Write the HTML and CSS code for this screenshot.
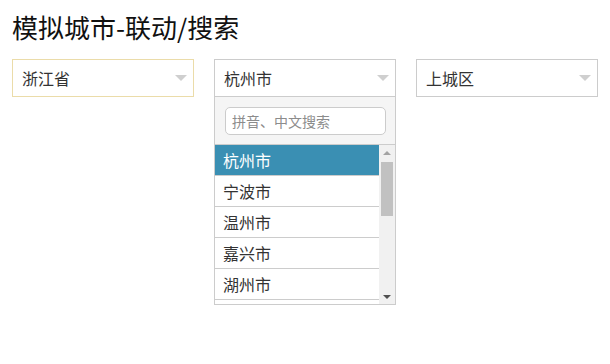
FILE: index.html
```html
<!doctype html>
<html>
<head>
    <meta charset="utf-8">
    <title>模拟城市-联动/搜索</title>
    <link rel="stylesheet" href="styles.css">
</head>

<body>
    <div class="page">
        <h1 class="title">模拟城市-联动/搜索</h1>

        <div class="selects">
            <div class="select focus">
                <div class="select-head">
                    <span>浙江省</span>
                    <i class="arrow"></i>
                </div>
            </div>

            <div class="select open">
                <div class="select-head">
                    <span>杭州市</span>
                    <i class="arrow"></i>
                </div>
                <div class="panel">
                    <div class="search">
                        <input type="text" placeholder="拼音、中文搜索" />
                    </div>
                    <div class="list-wrap">
                        <ul class="list">
                            <li class="on">杭州市</li>
                            <li>宁波市</li>
                            <li>温州市</li>
                            <li>嘉兴市</li>
                            <li>湖州市</li>
                            <li>绍兴市</li>
                        </ul>
                        <div class="scrollbar">
                            <div class="sb-btn up"></div>
                            <div class="sb-track">
                                <div class="sb-thumb"></div>
                            </div>
                            <div class="sb-btn down"></div>
                        </div>
                    </div>
                </div>
            </div>

            <div class="select">
                <div class="select-head">
                    <span>上城区</span>
                    <i class="arrow"></i>
                </div>
            </div>
        </div>
    </div>
</body>
</html>
```

FILE: styles.css
```css
* {
  box-sizing: border-box;
}

html, body {
  margin: 0;
  padding: 0;
  background: #ffffff;
}

body {
  font-family: "Noto Sans CJK SC", "Liberation Sans", sans-serif;
  color: #333333;
}

.page {
  padding: 8px 12px;
}

.title {
  margin: 0;
  height: 39px;
  line-height: 38px;
  font-size: 26px;
  font-weight: normal;
  color: #111111;
}

.selects {
  display: flex;
  align-items: flex-start;
  gap: 20px;
  margin-top: 12px;
}

.select {
  width: 182px;
  border: 1px solid #cccccc;
  background: #ffffff;
}

.select.focus {
  border-color: #ebdca9;
}

.select-head {
  height: 36px;
  display: flex;
  align-items: center;
  justify-content: space-between;
  padding: 0 6px 0 9px;
  font-size: 16px;
}

.arrow {
  width: 0;
  height: 0;
  border-left: 6px solid transparent;
  border-right: 6px solid transparent;
  border-top: 6px solid #cfcfcf;
}

.panel {
  border-top: 1px solid #cccccc;
  background: #f5f5f5;
}

.search {
  padding: 10px 9px 9px 10px;
  border-bottom: 1px solid #cccccc;
}

.search input {
  display: block;
  width: 100%;
  height: 28px;
  border: 1px solid #cccccc;
  border-radius: 5px;
  padding: 0 6px;
  font: 14px "Noto Sans CJK SC", sans-serif;
  background: #ffffff;
  outline: none;
}

.search input::placeholder {
  color: #8c8c8c;
}

.list-wrap {
  display: flex;
  height: 159px;
  overflow: hidden;
  background: #ffffff;
}

.list {
  flex: 1;
  margin: 0;
  padding: 0;
  list-style: none;
}

.list li {
  height: 31px;
  line-height: 30px;
  padding-left: 8px;
  font-size: 16px;
  border-bottom: 1px solid #cccccc;
  color: #333333;
}

.list li.on {
  background: #3a8fb3;
  color: #ffffff;
}

.scrollbar {
  width: 16px;
  background: #f1f1f1;
  display: flex;
  flex-direction: column;
}

.sb-btn {
  height: 15px;
  display: flex;
  align-items: center;
  justify-content: center;
}

.sb-btn.up::before {
  content: "";
  border-left: 4px solid transparent;
  border-right: 4px solid transparent;
  border-bottom: 4px solid #a3a3a3;
}

.sb-btn.down::before {
  content: "";
  border-left: 4px solid transparent;
  border-right: 4px solid transparent;
  border-top: 4px solid #505050;
}

.sb-track {
  flex: 1;
  padding: 2px 2px 0 2px;
}

.sb-thumb {
  height: 54px;
  background: #c1c1c1;
}
```
